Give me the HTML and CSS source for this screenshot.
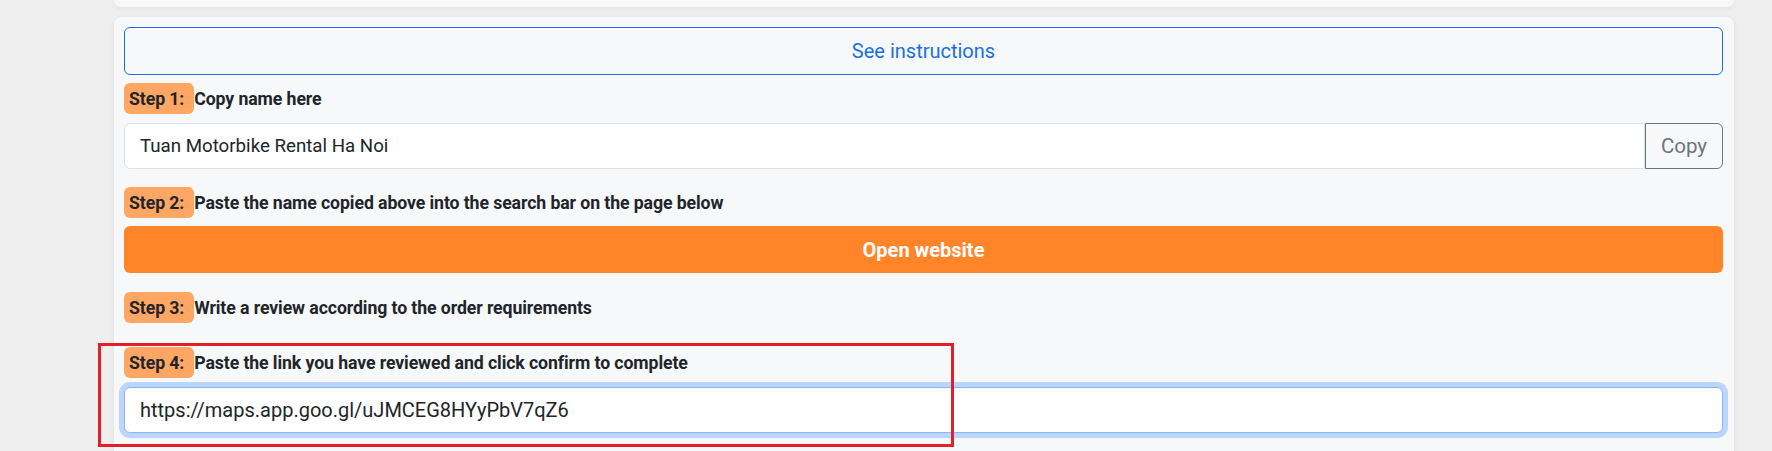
FILE: index.html
```html
<!DOCTYPE html>
<html lang="en">
<head>
<meta charset="utf-8">
<title>Review task</title>
<link rel="stylesheet" href="styles.css">
</head>
<body>
<div class="page">
  <div class="card card-prev"></div>
  <div class="card card-main">
    <button class="btn btn-outline">See instructions</button>
    <div class="step">
      <span class="badge">Step 1:</span><span class="label">Copy name here</span>
    </div>
    <div class="input-group">
      <input class="field field-group" type="text" value="Tuan Motorbike Rental Ha Noi" readonly>
      <button class="btn-copy">Copy</button>
    </div>
    <div class="step step-spaced">
      <span class="badge">Step 2:</span><span class="label">Paste the name copied above into the search bar on the page below</span>
    </div>
    <button class="btn btn-orange">Open website</button>
    <div class="step step-spaced">
      <span class="badge">Step 3:</span><span class="label">Write a review according to the order requirements</span>
    </div>
    <div class="step step-far">
      <span class="badge">Step 4:</span><span class="label">Paste the link you have reviewed and click confirm to complete</span>
    </div>
    <input class="field field-focus" type="text" value="https://maps.app.goo.gl/uJMCEG8HYyPbV7qZ6">
    <div class="annotation"></div>
  </div>
</div>
</body>
</html>
```

FILE: styles.css
```css
* { box-sizing: border-box; }

html, body {
  margin: 0;
  padding: 0;
  background: #efefef;
  font-family: Roboto, "Liberation Sans", sans-serif;
  color: #212529;
  overflow: hidden;
}

.page {
  width: 1620px;
  margin-left: 114px;
  display: flex;
  flex-direction: column;
  gap: 10px;
}

.card {
  background: #f7f8fa;
  border-radius: 8px;
  box-shadow: 0 1px 6px rgba(0, 0, 0, 0.07);
}

.card-prev {
  height: 7px;
  border-radius: 0 0 8px 8px;
}

.card-main {
  position: relative;
  padding: 10px 11px 40px 10px;
  display: flex;
  flex-direction: column;
}

.btn {
  display: block;
  width: 100%;
  font-family: Roboto, "Liberation Sans", sans-serif;
  font-size: 20px;
  border-radius: 6px;
  cursor: pointer;
}

.btn-outline {
  height: 48px;
  background: transparent;
  border: 1px solid #1a6fe6;
  color: #1a6fe6;
}

.btn-orange {
  height: 47px;
  margin-top: 8px;
  background: #ff8528;
  border: none;
  color: #ffffff;
  font-weight: 700;
}

.step {
  display: flex;
  align-items: center;
  height: 31px;
  margin-top: 8px;
  font-size: 17.7px;
  letter-spacing: -0.1px;
}

.step-spaced { margin-top: 18px; }
.step-far { margin-top: 24px; }

.btn-orange + .step-spaced { margin-top: 19px; }

.badge {
  display: flex;
  align-items: center;
  height: 31px;
  padding: 0 10px 0 5px;
  background: #fea764;
  border-radius: 6px;
  font-weight: 700;
}

.label {
  font-weight: 700;
  color: #212529;
}

.input-group {
  display: flex;
  height: 46px;
  margin-top: 9px;
}

.field {
  height: 46px;
  padding: 0 15px;
  font-family: Roboto, "Liberation Sans", sans-serif;
  font-size: 18.7px;
  color: #212529;
  background: #ffffff;
  border: 1px solid #dee2e6;
  border-radius: 6px;
  outline: none;
}

.field-group {
  flex: 1;
  border-radius: 6px 0 0 6px;
}

.btn-copy {
  width: 78px;
  height: 46px;
  background: transparent;
  border: 1px solid #6c757d;
  border-radius: 0 6px 6px 0;
  color: #6c757d;
  font-family: Roboto, "Liberation Sans", sans-serif;
  font-size: 20.5px;
}

.field-focus {
  width: 100%;
  margin-top: 9px;
  font-size: 20px;
  border-color: #86b7fe;
  box-shadow: 0 0 0 5px rgba(13, 110, 253, 0.25);
}

.annotation {
  position: absolute;
  left: -16px;
  top: 326px;
  width: 856px;
  height: 104px;
  border: 3px solid #e3202a;
  pointer-events: none;
}
```
